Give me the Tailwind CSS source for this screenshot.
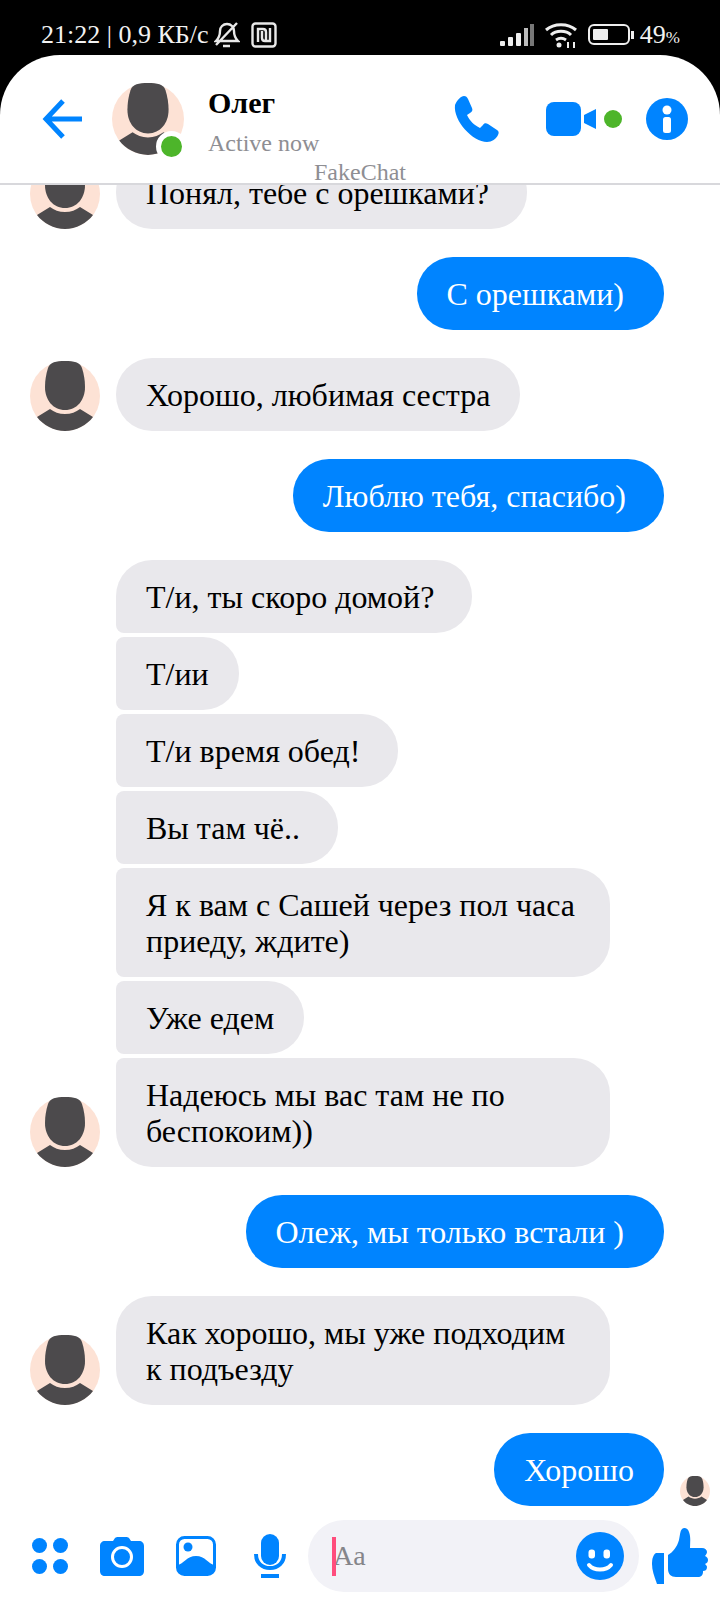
<!DOCTYPE html>
<html lang="ru">
    <head>
        <meta charset="UTF-8">
        <meta name="viewport" content="width=device-width, initial-scale=1.0">
        <title>FakeChat</title>
        <script src="https://cdn.jsdelivr.net/npm/@tailwindcss/browser@4"></script>
    </head>
    <body class="bg-black font-['Liberation_Serif',serif]">
        <svg class="hidden">
            <symbol id="avatar" viewBox="0 0 70 70">
                <circle cx="35" cy="35" r="35" fill="#fde2d5"/>
                <path d="M35 0c-9 0-15 1-17 7-2 6-3 13-3 19 0 13 8 23 20 23s20-10 20-23c0-6-1-13-3-19-2-6-8-7-17-7z" fill="#4c4a4c"/>
                <path d="M7 56l13-8c4 3 9 5 15 5s11-2 15-5l13 8c-6 8-17 14-28 14S13 64 7 56z" fill="#4c4a4c"/>
            </symbol>
        </svg>
        <div class="w-[720px] h-[1600px] flex flex-col overflow-hidden">
            <!-- Status bar -->
            <div class="h-[55px] shrink-0 flex items-center pt-[14px] pl-[41px] pr-[40px] text-[#f2f2f2] text-[26px]">
                <span>21:22 | 0,9 КБ/с</span>
                <svg class="ml-[6px] w-[26px] h-[27px]" viewBox="0 0 26 27" fill="none" stroke="#e8e8e8" stroke-width="2.4">
                    <path d="M2 20h22c-3-3-4-5-4-10 0-4-3-7-7-7s-7 3-7 7c0 5-1 7-4 10zM2 24L23 2M9 25h7"/>
                </svg>
                <svg class="ml-[11px] w-[26px] h-[26px]" viewBox="0 0 26 26" fill="none" stroke="#e8e8e8" stroke-width="2.4">
                    <rect x="1.5" y="1.5" width="23" height="23" rx="3"/>
                    <path d="M7 20V7h5c2 0 3 1 3 3v8M19 6v13h-5c-2 0-3-1-3-3V9"/>
                </svg>
                <svg class="ml-auto w-[34px] h-[22px]" viewBox="0 0 34 22" fill="#eee">
                    <rect x="0" y="17" width="5" height="5" rx="1"/>
                    <rect x="8" y="13" width="5" height="9" rx="1"/>
                    <rect x="16" y="9" width="5" height="13" rx="1"/>
                    <rect x="24" y="4" width="4" height="18" fill="#bbb"/>
                    <rect x="30" y="0" width="4" height="22" fill="#777"/>
                </svg>
                <svg class="ml-[10px] w-[34px] h-[26px]" viewBox="0 0 34 26" fill="none" stroke="#eee" stroke-width="3">
                    <path d="M2 8c8-7 22-7 30 0M7 13c5-5 15-5 20 0M12 18c3-2 7-2 10 0"/>
                    <circle cx="15" cy="23" r="2.5" fill="#eee" stroke="none"/>
                    <path d="M24 26v-6M30 26v-6" stroke-width="2"/>
                </svg>
                <div class="ml-[10px] flex items-center">
                    <div class="w-[42px] h-[21px] border-[2.5px] border-[#eee] rounded-[6px] p-[3px]">
                        <div class="w-[15px] h-full bg-[#eee] rounded-[1px]"></div>
                    </div>
                    <div class="w-[3px] h-[8px] ml-[1px] bg-[#eee]"></div>
                </div>
                <span class="ml-[6px]">49<span class="text-[17px]">%</span></span>
            </div>
            <!-- Header -->
            <div class="relative h-[130px] shrink-0 bg-white rounded-t-[60px] border-b-2 border-[#d8d8dc] flex items-start">
                <svg class="mt-[44px] ml-[42px] w-[41px] h-[40px]" viewBox="0 0 41 40" fill="none" stroke="#0084ff" stroke-width="5">
                    <path d="M21 2L4 20l17 18M4 20h36"/>
                </svg>
                <div class="relative mt-[28px] ml-[29px] w-[72px] h-[72px]">
                    <svg class="w-[72px] h-[72px]"><use href="#avatar"/></svg>
                    <div class="absolute right-[-3px] bottom-[-7px] w-[31px] h-[31px] rounded-full bg-[#4db52a] border-[5px] border-white"></div>
                </div>
                <div class="ml-[24px] mt-[30px]">
                    <div class="text-[30px] font-bold leading-[36px] text-black">Олег</div>
                    <div class="text-[24px] leading-[28px] mt-[8px] text-[#8e8e93]">Active now</div>
                </div>
                <div class="absolute left-[314px] top-[104px] text-[24px] leading-[26px] text-[#8e8e93]">FakeChat</div>
                <svg class="ml-auto mt-[41px] w-[46px] h-[46px]" viewBox="0 0 46 46" fill="#0084ff">
                    <path d="M2 9c2-5 6-9 9-9 2 0 3 1 4 3l4 9c1 2 0 4-2 5l-3 2c3 6 7 10 13 13l3-3c1-2 3-2 5-1l9 6c2 1 2 3 1 5-2 4-6 7-11 7C20 46 0 25 2 9z"/>
                </svg>
                <svg class="ml-[47px] mt-[47px] w-[50px] h-[34px]" viewBox="0 0 50 34" fill="#0084ff">
                    <rect x="0" y="0" width="35" height="34" rx="8"/>
                    <path d="M38 13l12-6v20l-12-6z"/>
                </svg>
                <div class="ml-[8px] mt-[55px] w-[18px] h-[18px] rounded-full bg-[#4db52a]"></div>
                <svg class="ml-[24px] mr-[32px] mt-[43px] w-[42px] h-[42px]" viewBox="0 0 42 42">
                    <circle cx="21" cy="21" r="21" fill="#0084ff"/>
                    <circle cx="21" cy="12" r="4.5" fill="#fff"/>
                    <rect x="17" y="19" width="8" height="16" rx="2.5" fill="#fff"/>
                </svg>
            </div>
            <!-- Messages -->
            <div class="flex-1 min-h-0 overflow-hidden bg-white text-[32px] leading-[36px]">
                <div class="-mt-[29px] flex flex-col">
                    <div class="flex items-end pl-[30px] pr-[56px]">
                        <svg class="w-[70px] h-[70px] shrink-0"><use href="#avatar"/></svg>
                        <div class="ml-[16px] pl-[30px] pr-[38px] pt-[19px] pb-[18px] rounded-[36px] bg-[#e9e8ec] text-black">Понял, тебе с орешками?</div>
                    </div>
                    <div class="flex justify-end pr-[56px] mt-[28px]">
                        <div class="pl-[30px] pr-[40px] pt-[19px] pb-[18px] rounded-[36px] bg-[#0084ff] text-white">С орешками)</div>
                    </div>
                    <div class="flex items-end pl-[30px] pr-[56px] mt-[28px]">
                        <svg class="w-[70px] h-[70px] shrink-0"><use href="#avatar"/></svg>
                        <div class="ml-[16px] px-[30px] pt-[19px] pb-[18px] rounded-[36px] bg-[#e9e8ec] text-black">Хорошо, любимая сестра</div>
                    </div>
                    <div class="flex justify-end pr-[56px] mt-[28px]">
                        <div class="pl-[30px] pr-[38px] pt-[19px] pb-[18px] rounded-[36px] bg-[#0084ff] text-white">Люблю тебя, спасибо)</div>
                    </div>
                    <div class="mt-[28px] flex flex-col items-start gap-[4px] pl-[116px] pr-[110px]">
                        <div class="pl-[30px] pr-[38px] pt-[19px] pb-[18px] rounded-[36px] rounded-bl-[8px] bg-[#e9e8ec] text-black">Т/и, ты скоро домой?</div>
                        <div class="px-[30px] pt-[19px] pb-[18px] rounded-r-[36px] rounded-l-[8px] bg-[#e9e8ec] text-black">Т/ии</div>
                        <div class="pl-[30px] pr-[38px] pt-[19px] pb-[18px] rounded-r-[36px] rounded-l-[8px] bg-[#e9e8ec] text-black">Т/и время обед!</div>
                        <div class="pl-[30px] pr-[38px] pt-[19px] pb-[18px] rounded-r-[36px] rounded-l-[8px] bg-[#e9e8ec] text-black">Вы там чё..</div>
                        <div class="w-[494px] px-[30px] pt-[19px] pb-[18px] rounded-r-[36px] rounded-l-[8px] bg-[#e9e8ec] text-black">Я к вам с Сашей через пол часа приеду, ждите)</div>
                        <div class="px-[30px] pt-[19px] pb-[18px] rounded-r-[36px] rounded-l-[8px] bg-[#e9e8ec] text-black">Уже едем</div>
                    </div>
                    <div class="flex items-end pl-[30px] pr-[56px] mt-[4px]">
                        <svg class="w-[70px] h-[70px] shrink-0"><use href="#avatar"/></svg>
                        <div class="w-[494px] ml-[16px] px-[30px] pt-[19px] pb-[18px] rounded-[36px] rounded-tl-[8px] bg-[#e9e8ec] text-black">Надеюсь мы вас там не по беспокоим))</div>
                    </div>
                    <div class="flex justify-end pr-[56px] mt-[28px]">
                        <div class="pl-[30px] pr-[40px] pt-[19px] pb-[18px] rounded-[36px] bg-[#0084ff] text-white">Олеж, мы только встали )</div>
                    </div>
                    <div class="flex items-end pl-[30px] pr-[56px] mt-[28px]">
                        <svg class="w-[70px] h-[70px] shrink-0"><use href="#avatar"/></svg>
                        <div class="w-[494px] ml-[16px] px-[30px] pt-[19px] pb-[18px] rounded-[36px] bg-[#e9e8ec] text-black">Как хорошо, мы уже подходим к подъезду</div>
                    </div>
                    <div class="flex justify-end items-end pr-[10px] mt-[28px]">
                        <div class="px-[30px] pt-[19px] pb-[18px] rounded-[36px] bg-[#0084ff] text-white">Хорошо</div>
                        <svg class="ml-[16px] w-[30px] h-[30px]"><use href="#avatar"/></svg>
                    </div>
                </div>
            </div>
            <!-- Input bar -->
            <div class="h-[80px] shrink-0 bg-white flex items-start">
                <svg class="ml-[32px] mt-[18px] w-[36px] h-[36px]" viewBox="0 0 36 36" fill="#0084ff">
                    <circle cx="7.5" cy="7.5" r="7.5"/>
                    <circle cx="28.5" cy="7.5" r="7.5"/>
                    <circle cx="7.5" cy="28.5" r="7.5"/>
                    <circle cx="28.5" cy="28.5" r="7.5"/>
                </svg>
                <svg class="ml-[32px] mt-[17px] w-[44px] h-[39px]" viewBox="0 0 44 39">
                    <path d="M5 4h8l2-3c1-1 2-1 3-1h8c1 0 2 0 3 1l2 3h8c3 0 5 2 5 5v25c0 3-2 5-5 5H5c-3 0-5-2-5-5V9c0-3 2-5 5-5z" fill="#0084ff"/>
                    <circle cx="22" cy="20" r="9.5" fill="none" stroke="#fff" stroke-width="3"/>
                </svg>
                <svg class="ml-[32px] mt-[16px] w-[40px] h-[40px]" viewBox="0 0 40 40">
                    <rect x="1.5" y="1.5" width="37" height="37" rx="7" fill="#fff" stroke="#0084ff" stroke-width="3"/>
                    <circle cx="12" cy="11" r="4.5" fill="#0084ff"/>
                    <path d="M2 29c5-1 9-9 18-9s13 8 18 9v4c0 3-2 5-5 5H7c-3 0-5-2-5-5z" fill="#0084ff"/>
                </svg>
                <svg class="ml-[38px] mt-[14px] w-[32px] h-[44px]" viewBox="0 0 32 44">
                    <rect x="7" y="0" width="18" height="31" rx="9" fill="#0084ff"/>
                    <path d="M2 20c0 9 6 14 14 14s14-5 14-14" fill="none" stroke="#0084ff" stroke-width="4"/>
                    <rect x="7" y="40" width="18" height="4" fill="#0084ff"/>
                </svg>
                <div class="ml-[22px] w-[331px] h-[72px] rounded-[36px] bg-[#f2f2f7] flex items-center pl-[24px] pr-[15px]">
                    <div class="relative z-10 w-[4px] h-[39px] bg-[#ff4d7d]"></div>
                    <span class="-ml-[3px] text-[28px] text-[#85858a]">Aa</span>
                    <svg class="ml-auto w-[48px] h-[48px]" viewBox="0 0 48 48">
                        <circle cx="24" cy="24" r="24" fill="#0084ff"/>
                        <rect x="12.5" y="17.5" width="6.5" height="9" rx="3" fill="#fff"/>
                        <rect x="27.5" y="17.5" width="6.5" height="9" rx="3" fill="#fff"/>
                        <path d="M13 33c5 6 17 6 22 0" fill="none" stroke="#fff" stroke-width="4" stroke-linecap="round"/>
                    </svg>
                </div>
                <svg class="ml-[13px] mt-[8px] w-[56px] h-[56px]" viewBox="0 0 56 56" fill="#0084ff">
                    <path d="M4 25h8v31H5c-3-8-5-14-5-20 0-5 1-9 4-11z"/>
                    <path d="M16 27c5-3 9-8 11-15 1-5 1-9 3-11 2-2 6-1 7 3 2 5 1 11 1 16h12c3 0 5 2 5 4 0 1-1 3-2 4 2 1 3 2 3 4s-1 3-3 4c1 1 2 2 2 3 0 3-2 4-4 4v1c0 3-2 5-5 5H24c-5 0-8-3-8-8z"/>
                </svg>
            </div>
        </div>
    </body>
</html>
